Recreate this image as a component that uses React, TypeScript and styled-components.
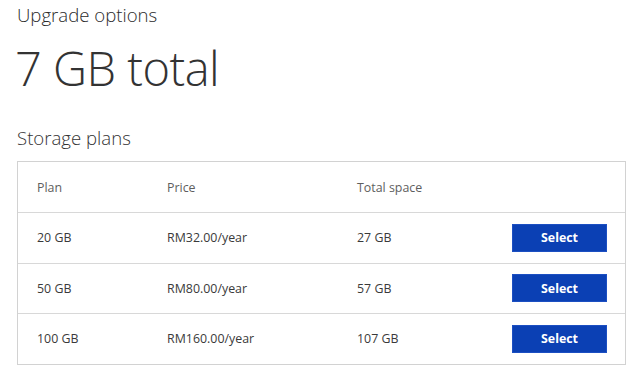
import React from 'react';
import styled, { createGlobalStyle } from 'styled-components';

const GlobalStyle = createGlobalStyle`
  html, body {
    margin: 0;
    padding: 0;
    background: #ffffff;
  }
  body {
    font-family: "Open Sans", "Noto Sans", "Liberation Sans", sans-serif;
    color: #333;
  }
`;

const Page = styled.div`
  width: 640px;
  height: 382px;
  padding: 0 15px 0 17px;
  box-sizing: border-box;
  display: flex;
  flex-direction: column;
`;

const Heading = styled.h2`
  margin: 1px 0 0;
  font-size: 18.6px;
  font-weight: 300;
  line-height: 28px;
  color: #2b2b2b;
`;

const Total = styled.h1`
  margin: 11px 0 0 -2px;
  font-size: 47px;
  font-weight: 300;
  line-height: 56px;
  letter-spacing: -0.5px;
  color: #333;
`;

const SubHeading = styled.h3`
  margin: 29px 0 0;
  font-size: 18.6px;
  font-weight: 300;
  line-height: 26px;
  color: #333;
`;

const Table = styled.div`
  margin-top: 10px;
  width: 609px;
  border: 1px solid #d2d2d2;
  box-sizing: border-box;
`;

// header row has no divider above it; plan rows get a thin rule
const Row = styled.div<{ $head?: boolean }>`
  display: grid;
  grid-template-columns: 130px 190px 1fr 95px;
  align-items: center;
  height: ${(p) => (p.$head ? '50px' : '50.5px')};
  box-sizing: border-box;
  padding: 0 18px 0 19px;
  border-top: ${(p) => (p.$head ? 'none' : '1px solid #d8d8d8')};
  font-size: 12.4px;
  color: ${(p) => (p.$head ? '#5e5e5e' : '#3a3a3a')};
`;

const Cell = styled.span`
  white-space: nowrap;
`;

const SelectButton = styled.button`
  width: 95px;
  height: 28px;
  border: 1px solid #1c4fc2;
  background: #0b40b4;
  color: #fff;
  font-family: "Open Sans", "Noto Sans", sans-serif;
  font-size: 12.4px;
  font-weight: 700;
  cursor: pointer;
  padding: 0;
`;

const plans = [
  { plan: '20 GB', price: 'RM32.00/year', total: '27 GB' },
  { plan: '50 GB', price: 'RM80.00/year', total: '57 GB' },
  { plan: '100 GB', price: 'RM160.00/year', total: '107 GB' },
];

export default function App() {
  return (
    <>
      <GlobalStyle />
      <Page>
        <Heading>Upgrade options</Heading>
        <Total>7 GB total</Total>
        <SubHeading>Storage plans</SubHeading>
        <Table>
          <Row $head>
            <Cell>Plan</Cell>
            <Cell>Price</Cell>
            <Cell>Total space</Cell>
            <span />
          </Row>
          {plans.map((p) => (
            <Row key={p.plan}>
              <Cell>{p.plan}</Cell>
              <Cell>{p.price}</Cell>
              <Cell>{p.total}</Cell>
              <SelectButton>Select</SelectButton>
            </Row>
          ))}
        </Table>
      </Page>
    </>
  );
}
